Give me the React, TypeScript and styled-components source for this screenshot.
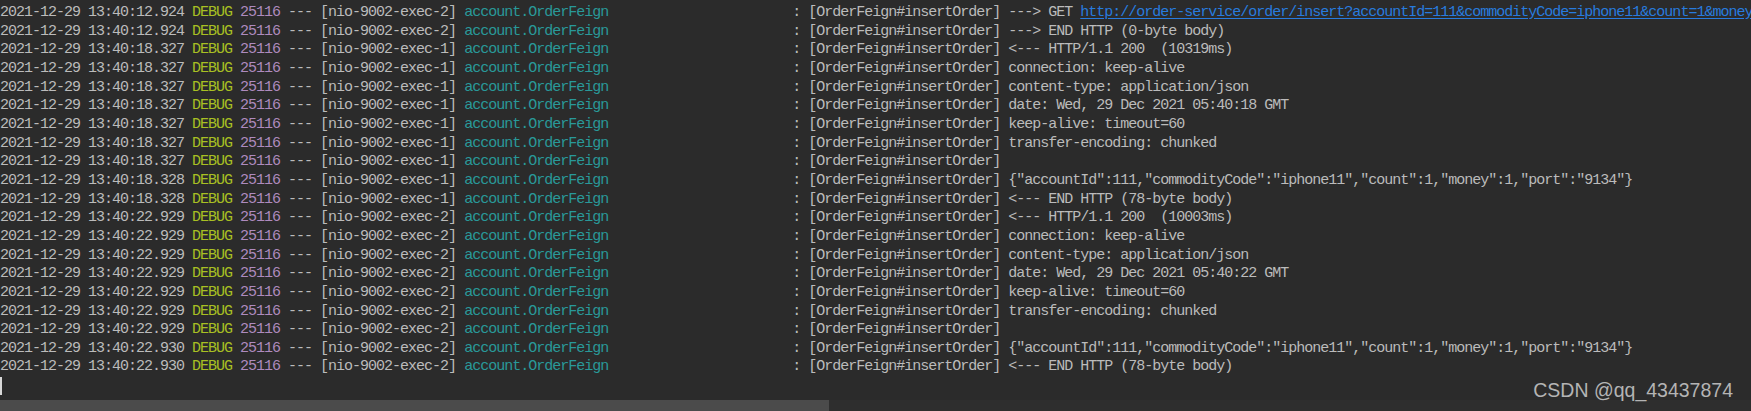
import React from "react";
import styled, { createGlobalStyle } from "styled-components";

const GlobalStyle = createGlobalStyle`
  html, body {
    margin: 0;
    padding: 0;
    background: #2b2b2b;
  }
  #root {
    width: 1751px;
    height: 411px;
  }
`;

const Frame = styled.div`
  position: relative;
  display: flex;
  flex-direction: column;
  width: 1751px;
  height: 411px;
  background: #2b2b2b;
  overflow: hidden;
`;

const Console = styled.div`
  flex: 1;
  display: flex;
  flex-direction: column;
  padding-top: 4px;
  overflow: hidden;
  font-family: "Liberation Mono", "DejaVu Sans Mono", monospace;
  font-size: 15px;
  letter-spacing: -1px;
  line-height: 18.67px;
  color: #bbbbbb;
  font-kerning: none;
  font-variant-ligatures: none;
`;

const Line = styled.div`
  height: 18.67px;
  white-space: pre;
  overflow: hidden;
`;

const Level = styled.span`
  color: #a8c023;
`;

const Pid = styled.span`
  color: #ae8abe;
`;

const Logger = styled.span`
  color: #299999;
`;

const Link = styled.span`
  color: #287bde;
  text-decoration: underline;
  text-underline-offset: 2px;
`;

const Cursor = styled.span`
  display: inline-block;
  width: 2px;
  height: 18px;
  background: #d8d8d8;
  vertical-align: top;
`;

const ScrollTrack = styled.div`
  height: 11px;
  flex: none;
  background: #2e2e2e;
  display: flex;
`;

const ScrollThumb = styled.div`
  width: 829px;
  height: 100%;
  background: #4b4b4b;
`;

const Watermark = styled.div`
  position: absolute;
  right: 18px;
  bottom: 11px;
  font-family: "Liberation Sans", Arial, sans-serif;
  font-size: 19.5px;
  line-height: 20px;
  color: #b4b4b4;
  white-space: nowrap;
`;

type Row = { time: string; exec: number; msg: React.ReactNode };

const URL =
  "http://order-service/order/insert?accountId=111&commodityCode=iphone11&count=1&money=1 HTTP/1.1";

const JSON_BODY =
  '{"accountId":111,"commodityCode":"iphone11","count":1,"money":1,"port":"9134"}';

const rows: Row[] = [
  { time: "12.924", exec: 2, msg: <>---&gt; GET <Link>{URL}</Link></> },
  { time: "12.924", exec: 2, msg: "---> END HTTP (0-byte body)" },
  { time: "18.327", exec: 1, msg: "<--- HTTP/1.1 200  (10319ms)" },
  { time: "18.327", exec: 1, msg: "connection: keep-alive" },
  { time: "18.327", exec: 1, msg: "content-type: application/json" },
  { time: "18.327", exec: 1, msg: "date: Wed, 29 Dec 2021 05:40:18 GMT" },
  { time: "18.327", exec: 1, msg: "keep-alive: timeout=60" },
  { time: "18.327", exec: 1, msg: "transfer-encoding: chunked" },
  { time: "18.327", exec: 1, msg: "" },
  { time: "18.328", exec: 1, msg: JSON_BODY },
  { time: "18.328", exec: 1, msg: "<--- END HTTP (78-byte body)" },
  { time: "22.929", exec: 2, msg: "<--- HTTP/1.1 200  (10003ms)" },
  { time: "22.929", exec: 2, msg: "connection: keep-alive" },
  { time: "22.929", exec: 2, msg: "content-type: application/json" },
  { time: "22.929", exec: 2, msg: "date: Wed, 29 Dec 2021 05:40:22 GMT" },
  { time: "22.929", exec: 2, msg: "keep-alive: timeout=60" },
  { time: "22.929", exec: 2, msg: "transfer-encoding: chunked" },
  { time: "22.929", exec: 2, msg: "" },
  { time: "22.930", exec: 2, msg: JSON_BODY },
  { time: "22.930", exec: 2, msg: "<--- END HTTP (78-byte body)" },
];

const LOGGER = "account.OrderFeign".padEnd(40, " ");

export default function App() {
  return (
    <>
      <GlobalStyle />
      <Frame>
        <Console>
          {rows.map((r, i) => (
            <Line key={i}>
              {`2021-12-29 13:40:${r.time} `}
              <Level>DEBUG</Level> <Pid>25116</Pid>
              {` --- [nio-9002-exec-${r.exec}] `}
              <Logger>{LOGGER}</Logger>
              {" : [OrderFeign#insertOrder] "}
              {r.msg}
            </Line>
          ))}
          <Line>
            <Cursor />
          </Line>
        </Console>
        <ScrollTrack>
          <ScrollThumb />
        </ScrollTrack>
        <Watermark>CSDN @qq_43437874</Watermark>
      </Frame>
    </>
  );
}
